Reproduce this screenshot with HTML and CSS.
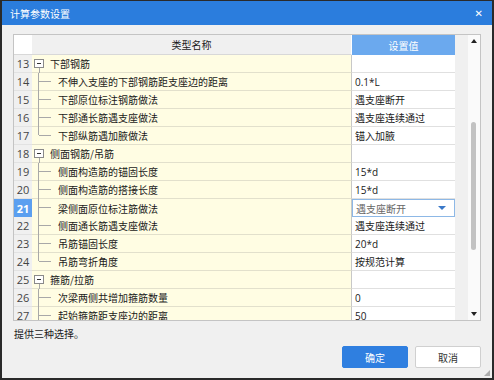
FILE: index.html
```html
<!DOCTYPE html>
<html lang="zh">
<head>
<meta charset="utf-8">
<title>计算参数设置</title>
<link rel="stylesheet" href="styles.css">
</head>
<body>
<div class="window">
  <div class="titlebar">
    <span class="title">计算参数设置</span>
    <span class="close">✕</span>
  </div>
  <div class="content">
    <div class="grid">
      <div class="main">
        <div class="row head">
          <div class="c-num"></div>
          <div class="c-name">类型名称</div>
          <div class="c-val">设置值</div>
          <div class="c-fill"></div>
        </div>
        <div class="row group"><div class="c-num">13</div><div class="c-name"><span class="box top"></span>下部钢筋</div><div class="c-val"></div><div class="c-fill"></div></div>
        <div class="row child"><div class="c-num">14</div><div class="c-name"><span class="tree"></span>不伸入支座的下部钢筋距支座边的距离</div><div class="c-val">0.1*L</div><div class="c-fill"></div></div>
        <div class="row child"><div class="c-num">15</div><div class="c-name"><span class="tree"></span>下部原位标注钢筋做法</div><div class="c-val">遇支座断开</div><div class="c-fill"></div></div>
        <div class="row child"><div class="c-num">16</div><div class="c-name"><span class="tree"></span>下部通长筋遇支座做法</div><div class="c-val">遇支座连续通过</div><div class="c-fill"></div></div>
        <div class="row child"><div class="c-num">17</div><div class="c-name"><span class="tree last"></span>下部纵筋遇加腋做法</div><div class="c-val">锚入加腋</div><div class="c-fill"></div></div>
        <div class="row group"><div class="c-num">18</div><div class="c-name"><span class="box"></span>侧面钢筋/吊筋</div><div class="c-val"></div><div class="c-fill"></div></div>
        <div class="row child"><div class="c-num">19</div><div class="c-name"><span class="tree"></span>侧面构造筋的锚固长度</div><div class="c-val">15*d</div><div class="c-fill"></div></div>
        <div class="row child"><div class="c-num">20</div><div class="c-name"><span class="tree"></span>侧面构造筋的搭接长度</div><div class="c-val">15*d</div><div class="c-fill"></div></div>
        <div class="row child selected"><div class="c-num">21</div><div class="c-name"><span class="tree"></span>梁侧面原位标注筋做法</div><div class="c-val"><div class="combo"><span>遇支座断开</span><span class="arrow"></span></div></div><div class="c-fill"></div></div>
        <div class="row child"><div class="c-num">22</div><div class="c-name"><span class="tree"></span>侧面通长筋遇支座做法</div><div class="c-val">遇支座连续通过</div><div class="c-fill"></div></div>
        <div class="row child"><div class="c-num">23</div><div class="c-name"><span class="tree"></span>吊筋锚固长度</div><div class="c-val">20*d</div><div class="c-fill"></div></div>
        <div class="row child"><div class="c-num">24</div><div class="c-name"><span class="tree last"></span>吊筋弯折角度</div><div class="c-val">按规范计算</div><div class="c-fill"></div></div>
        <div class="row group"><div class="c-num">25</div><div class="c-name"><span class="box"></span>箍筋/拉筋</div><div class="c-val"></div><div class="c-fill"></div></div>
        <div class="row child"><div class="c-num">26</div><div class="c-name"><span class="tree"></span>次梁两侧共增加箍筋数量</div><div class="c-val">0</div><div class="c-fill"></div></div>
        <div class="row child"><div class="c-num">27</div><div class="c-name"><span class="tree"></span>起始箍筋距支座边的距离</div><div class="c-val">50</div><div class="c-fill"></div></div>
      </div>
      <div class="vscroll">
        <span class="sarrow up"></span>
        <span class="thumb"></span>
        <span class="sarrow down"></span>
      </div>
    </div>
    <div class="status">提供三种选择。</div>
    <div class="buttons">
      <button class="btn primary">确定</button>
      <button class="btn">取消</button>
    </div>
    <span class="grip"></span>
  </div>
</div>
</body>
</html>
```

FILE: styles.css
```css
* { box-sizing: border-box; }
body {
  margin: 0;
  width: 494px;
  height: 380px;
  font-family: "Noto Sans CJK SC", "Microsoft YaHei", sans-serif;
  font-size: 10px;
  color: #1a1a1a;
  background: #222;
}
.window {
  width: 494px;
  height: 380px;
  border: 2px solid #2a2a2a;
  border-top-width: 1px;
  display: flex;
  flex-direction: column;
  background: #f0f0f0;
}
.titlebar {
  height: 24px;
  flex: none;
  background: #2b7ddd;
  color: #fff;
  display: flex;
  align-items: center;
  justify-content: space-between;
  padding: 0 9px 0 8px;
}
.title { font-size: 10px; }
.close { font-size: 10px; font-weight: bold; font-family: "DejaVu Sans", sans-serif; }
.content {
  flex: 1;
  position: relative;
  padding: 9px 0 0 11px;
}
.grid {
  width: 468px;
  height: 287px;
  border: 1px solid #c4c4c4;
  background: #fff;
  display: flex;
  overflow: hidden;
}
.main { width: 454px; flex: none; }
.row {
  display: grid;
  grid-template-columns: 18px 320px 103px 13px;
  height: 18px;
}
.row > div {
  display: flex;
  align-items: center;
  white-space: nowrap;
}
.c-num {
  background: #f0f0f0;
  color: #444;
  justify-content: center;
  font-family: "Open Sans", "Noto Sans", sans-serif;
  font-size: 11px;
  border-bottom: 1px solid #e2e2e2;
}
.c-name {
  background: #fffde3;
  border-bottom: 1px solid #e2e0cc;
  border-right: 1px solid #c8c8c8;
  position: relative;
  padding-left: 26px;
}
.c-val {
  background: #fff;
  border-bottom: 1px solid #e0e0e0;
  padding-left: 3px;
  font-family: "Open Sans", "Noto Sans CJK SC", sans-serif;
}
.c-fill { background: #f0f0f0; }
.row.head { height: 20px; }
.head .c-num { background: #fff; border-bottom: 1px solid #d8d8d8; }
.head .c-name {
  background: #f0f0f0;
  justify-content: center;
  padding-left: 0;
  border-bottom: 1px solid #d8d8d8;
  border-right: 1px solid #fff;
}
.head .c-val {
  background: #6ba9ee;
  color: #fff;
  justify-content: center;
  padding-left: 0;
  border-bottom: none;
}
.head .c-fill { background: #f0f0f0; }
.group .c-name { padding-left: 18px; }
.box {
  position: absolute;
  left: 2px;
  top: 4px;
  width: 10px;
  height: 9px;
  border: 1px solid #8a8a8a;
  background: #fff;
}
.box::after {
  content: "";
  position: absolute;
  left: 2px;
  top: 3px;
  width: 4px;
  height: 1px;
  background: #333;
}
.box::before {
  content: "";
  position: absolute;
  left: 4px;
  top: 8px;
  width: 1px;
  height: 6px;
  background: #a8a8a8;
}
.tree {
  position: absolute;
  left: 6px;
  top: 0;
  bottom: -1px;
  width: 12px;
  border-left: 1px solid #a8a8a8;
}
.tree::after {
  content: "";
  position: absolute;
  left: 0;
  top: 8px;
  width: 12px;
  height: 1px;
  background: #a8a8a8;
}
.tree.last { bottom: 9px; }
.selected .c-num {
  background: #5b9ff0;
  color: #fff;
  font-weight: bold;
}
.selected .c-val { padding: 0; }
.combo {
  width: 100%;
  height: 18px;
  border: 1px solid #8db8e6;
  display: flex;
  align-items: center;
  justify-content: space-between;
  padding: 0 8px 0 3px;
  color: #666;
}
.arrow {
  width: 0;
  height: 0;
  border-left: 4px solid transparent;
  border-right: 4px solid transparent;
  border-top: 4px solid #3a78c8;
}
.vscroll {
  width: 12px;
  flex: none;
  position: relative;
  background: #fafafa;
}
.sarrow {
  position: absolute;
  left: 3px;
  width: 0;
  height: 0;
  border-left: 3px solid transparent;
  border-right: 3px solid transparent;
}
.sarrow.up { top: 4px; border-bottom: 4px solid #222; }
.sarrow.down { bottom: 4px; border-top: 4px solid #222; }
.thumb {
  position: absolute;
  left: 3px;
  top: 87px;
  width: 5px;
  height: 128px;
  border-radius: 3px;
  background: #c2c2c2;
}
.status {
  margin-top: 7px;
  height: 12px;
  line-height: 12px;
  padding-left: 1px;
}
.buttons {
  display: flex;
  justify-content: flex-end;
  gap: 7px;
  padding-right: 11px;
  margin-top: 6px;
}
.btn {
  width: 66px;
  height: 22px;
  font-family: "Noto Sans CJK SC", sans-serif;
  font-size: 10px;
  border: 1px solid #d0d0d0;
  border-radius: 2px;
  background: #fff;
  color: #333;
  padding: 0;
}
.btn.primary {
  background: #2f7fe0;
  border-color: #2f7fe0;
  color: #fff;
}
.grip {
  position: absolute;
  right: 2px;
  bottom: 2px;
  width: 6px;
  height: 6px;
  background:
    radial-gradient(circle, #888 0.6px, transparent 0.9px) 0 0 / 2px 2px;
  clip-path: polygon(100% 0, 100% 100%, 0 100%);
}
```
